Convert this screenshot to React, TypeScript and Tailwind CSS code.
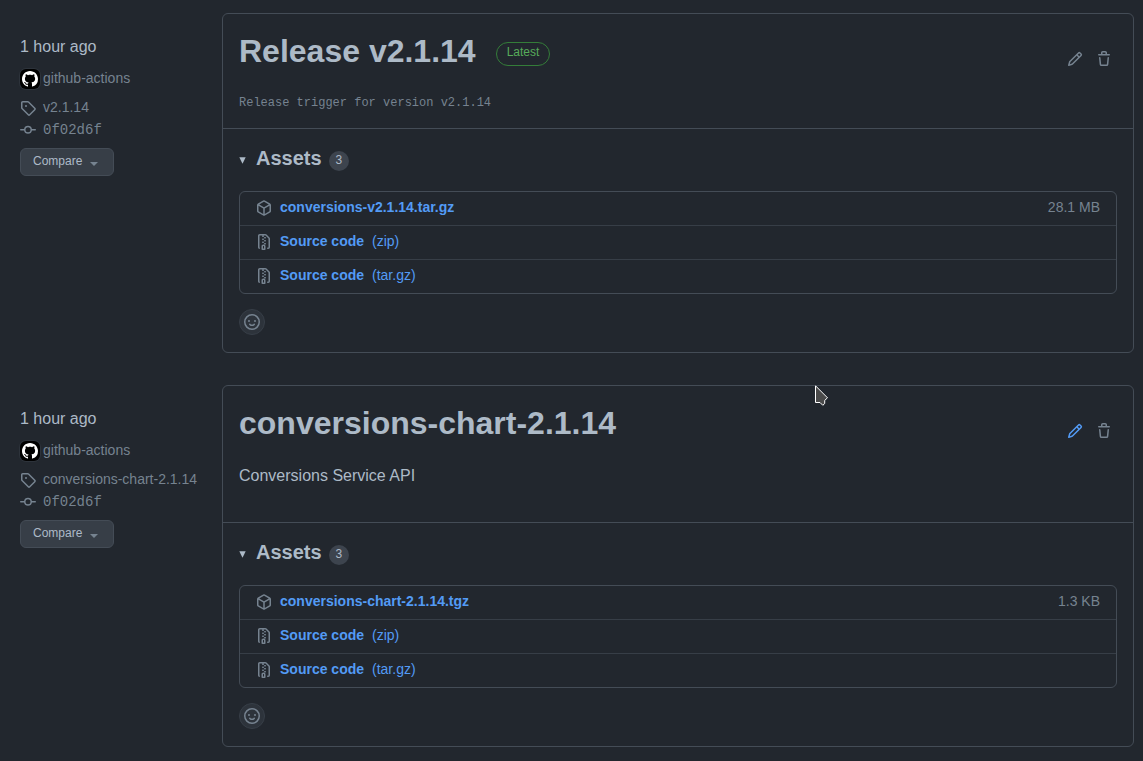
import React from "react";

const icons = {
  pencil:
    "M11.013 1.427a1.75 1.75 0 0 1 2.474 0l1.086 1.086a1.75 1.75 0 0 1 0 2.474l-8.61 8.61c-.21.21-.47.364-.756.445l-3.251.93a.75.75 0 0 1-.927-.928l.929-3.25c.081-.286.235-.547.445-.758l8.61-8.61Zm.176 4.823L9.75 4.81l-6.286 6.287a.253.253 0 0 0-.064.108l-.558 1.953 1.953-.558a.253.253 0 0 0 .108-.064Zm1.238-3.763a.25.25 0 0 0-.354 0L10.811 3.75l1.439 1.44 1.263-1.263a.25.25 0 0 0 0-.354Z",
  trash:
    "M11 1.75V3h2.25a.75.75 0 0 1 0 1.5H2.75a.75.75 0 0 1 0-1.5H5V1.75C5 .784 5.784 0 6.75 0h2.5C10.216 0 11 .784 11 1.75ZM4.496 6.675l.66 6.6a.25.25 0 0 0 .249.225h5.19a.25.25 0 0 0 .249-.225l.66-6.6a.75.75 0 0 1 1.492.149l-.66 6.6A1.748 1.748 0 0 1 10.595 15h-5.19a1.75 1.75 0 0 1-1.741-1.575l-.66-6.6a.75.75 0 1 1 1.492-.15ZM6.5 1.75V3h3V1.75a.25.25 0 0 0-.25-.25h-2.5a.25.25 0 0 0-.25.25Z",
  tag: "M1 7.775V2.75C1 1.784 1.784 1 2.75 1h5.025c.464 0 .91.184 1.238.513l6.25 6.25a1.75 1.75 0 0 1 0 2.474l-5.026 5.026a1.75 1.75 0 0 1-2.474 0l-6.25-6.25A1.752 1.752 0 0 1 1 7.775Zm1.5 0c0 .066.026.13.073.177l6.25 6.25a.25.25 0 0 0 .354 0l5.025-5.025a.25.25 0 0 0 0-.354l-6.25-6.25a.25.25 0 0 0-.177-.073H2.75a.25.25 0 0 0-.25.25ZM6 5a1 1 0 1 1 0 2 1 1 0 0 1 0-2Z",
  commit:
    "M11.93 8.5a4.002 4.002 0 0 1-7.86 0H.75a.75.75 0 0 1 0-1.5h3.32a4.002 4.002 0 0 1 7.86 0h3.32a.75.75 0 0 1 0 1.5Zm-1.43-.75a2.5 2.5 0 1 0-5 0 2.5 2.5 0 0 0 5 0Z",
  package:
    "m8.878.392 5.25 3.045c.54.314.872.89.872 1.514v6.098a1.75 1.75 0 0 1-.872 1.514l-5.25 3.045a1.75 1.75 0 0 1-1.756 0l-5.25-3.045A1.75 1.75 0 0 1 1 11.049V4.951c0-.624.332-1.201.872-1.514L7.122.392a1.75 1.75 0 0 1 1.756 0ZM7.875 1.69l-4.63 2.685L8 7.133l4.755-2.758-4.63-2.685a.248.248 0 0 0-.25 0ZM2.5 5.677v5.372c0 .09.047.171.125.216l4.625 2.683V8.432Zm6.25 8.271 4.625-2.683a.25.25 0 0 0 .125-.216V5.677L8.75 8.432Z",
  zip: "M3.5 1.75v11.5c0 .09.048.173.126.217a.75.75 0 0 1-.752 1.298A1.748 1.748 0 0 1 2 13.25V1.75C2 .784 2.784 0 3.75 0h5.586c.464 0 .909.185 1.237.513l2.914 2.914c.329.328.513.773.513 1.237v8.586A1.75 1.75 0 0 1 12.25 15h-.5a.75.75 0 0 1 0-1.5h.5a.25.25 0 0 0 .25-.25V4.664a.25.25 0 0 0-.073-.177L9.513 1.573a.25.25 0 0 0-.177-.073H7.25a.75.75 0 0 1 0 1.5h-.5a.75.75 0 0 1 0-1.5h-3a.25.25 0 0 0-.25.25Zm3.75 8.75h.5c.966 0 1.75.784 1.75 1.75v3a.75.75 0 0 1-.75.75h-2.5a.75.75 0 0 1-.75-.75v-3c0-.966.784-1.75 1.75-1.75ZM6 5.25a.75.75 0 0 1 .75-.75h.5a.75.75 0 0 1 0 1.5h-.5A.75.75 0 0 1 6 5.25Zm.75 2.25h.5a.75.75 0 0 1 0 1.5h-.5a.75.75 0 0 1 0-1.5ZM8 6.75A.75.75 0 0 1 8.75 6h.5a.75.75 0 0 1 0 1.5h-.5A.75.75 0 0 1 8 6.75ZM8.75 3h.5a.75.75 0 0 1 0 1.5h-.5a.75.75 0 0 1 0-1.5ZM8 9.75A.75.75 0 0 1 8.75 9h.5a.75.75 0 0 1 0 1.5h-.5A.75.75 0 0 1 8 9.75Zm-1 2.5v2.25h1v-2.25a.25.25 0 0 0-.25-.25h-.5a.25.25 0 0 0-.25.25Z",
  smiley:
    "M8 0a8 8 0 1 1 0 16A8 8 0 0 1 8 0ZM1.5 8a6.5 6.5 0 1 0 13 0 6.5 6.5 0 0 0-13 0Zm3.82 1.636a.75.75 0 0 1 1.038.175l.007.009c.103.118.22.222.35.31.264.178.683.37 1.285.37.602 0 1.02-.192 1.285-.371.13-.088.247-.192.35-.31l.007-.008a.75.75 0 0 1 1.222.87c-.06.085-.13.165-.204.254-.16.166-.338.316-.53.445-.474.32-1.18.628-2.13.628-.946 0-1.652-.308-2.126-.63a3.331 3.331 0 0 1-.715-.657.75.75 0 0 1 .183-1.044ZM12 7a1 1 0 1 1-2 0 1 1 0 0 1 2 0ZM5 8a1 1 0 1 1 0-2 1 1 0 0 1 0 2Z",
  github:
    "M8 0C3.58 0 0 3.58 0 8c0 3.54 2.29 6.53 5.47 7.59.4.07.55-.17.55-.38 0-.19-.01-.82-.01-1.49-2.01.37-2.53-.49-2.69-.94-.09-.23-.48-.94-.82-1.13-.28-.15-.68-.52-.01-.53.63-.01 1.08.58 1.23.82.72 1.21 1.87.87 2.33.66.07-.52.28-.87.51-1.07-1.78-.2-3.64-.89-3.64-3.95 0-.87.31-1.59.82-2.15-.08-.2-.36-1.02.08-2.12 0 0 .67-.21 2.2.82.64-.18 1.32-.27 2-.27s1.36.09 2 .27c1.53-1.04 2.2-.82 2.2-.82.44 1.1.16 1.92.08 2.12.51.56.82 1.27.82 2.15 0 3.07-1.87 3.75-3.65 3.95.29.25.54.73.54 1.48 0 1.07-.01 1.93-.01 2.2 0 .21.15.46.55.38A8.01 8.01 0 0 0 16 8c0-4.42-3.58-8-8-8Z",
};

function Icon({ name, className = "text-[#768390]" }: { name: keyof typeof icons; className?: string }) {
  return (
    <svg viewBox="0 0 16 16" width="16" height="16" fill="currentColor" aria-hidden="true" className={`shrink-0 ${className}`}>
      <path d={icons[name]} />
    </svg>
  );
}

interface Asset {
  name: string;
  kind?: string;
  size?: string;
}

interface Release {
  title: string;
  tag: string;
  latest?: boolean;
  editActive?: boolean;
  body: React.ReactNode;
  assets: Asset[];
}

const sources: Asset[] = [
  { name: "Source code", kind: "(zip)" },
  { name: "Source code", kind: "(tar.gz)" },
];

const releases: Release[] = [
  {
    title: "Release v2.1.14",
    tag: "v2.1.14",
    latest: true,
    body: (
      <p className="mt-5 pt-0.5 font-['Liberation_Mono',monospace] text-xs leading-[18px] text-[#768390]">
        Release trigger for version v2.1.14
      </p>
    ),
    assets: [{ name: "conversions-v2.1.14.tar.gz", size: "28.1 MB" }, ...sources],
  },
  {
    title: "conversions-chart-2.1.14",
    tag: "conversions-chart-2.1.14",
    editActive: true,
    body: <p className="mt-5 mb-[18px] text-base leading-6">Conversions Service API</p>,
    assets: [{ name: "conversions-chart-2.1.14.tgz", size: "1.3 KB" }, ...sources],
  },
];

function Meta({ tag }: { tag: string }) {
  return (
    <aside className="w-[202px] shrink-0 pt-[22px] text-sm text-[#768390]">
      <time className="block text-base leading-6 text-[#adbac7]">1 hour ago</time>
      <a href="#author" className="mt-[10px] flex items-center gap-[3px] leading-5">
        <span className="flex size-5 items-center justify-center rounded-md bg-black ring-1 ring-[#2d333b]">
          <Icon name="github" className="text-white" />
        </span>
        <span className="-mt-0.5">github-actions</span>
      </a>
      <a href="#tag" className="mt-2 flex h-[22px] items-center gap-[7px] leading-5">
        <Icon name="tag" />
        <span className="-mt-0.5">{tag}</span>
      </a>
      <a href="#commit" className="flex items-center gap-[7px] font-['Liberation_Mono',monospace] leading-[22px]">
        <Icon name="commit" />
        0f02d6f
      </a>
      <button
        type="button"
        className="mt-[7px] flex h-7 items-center rounded-md border border-[#444c56] bg-[#373e47] pr-[15px] pl-3 text-xs text-[#adbac7]"
      >
        <span className="pb-0.5">Compare</span>
        <span className="mt-1 ml-2 border-x-4 border-t-4 border-x-transparent border-t-[#768390]" />
      </button>
    </aside>
  );
}

function ReleaseCard({ release }: { release: Release }) {
  return (
    <article className="min-w-0 flex-1 rounded-md border border-[#444c56]">
      <header className="flex items-start justify-between border-b border-[#444c56] p-4">
        <div>
          <div className="flex items-end gap-5">
            <h1 className="text-[32px] leading-[42px] font-bold">{release.title}</h1>
            {release.latest && (
              <span className="mb-1.5 rounded-full border border-[#347d39] px-[10px] pb-1 text-xs leading-[18px] text-[#57ab5a]">
                Latest
              </span>
            )}
          </div>
          {release.body}
        </div>
        <div className="mt-4 flex gap-[3px]">
          <button type="button" aria-label="Edit release" className="p-[5px]">
            <Icon name="pencil" className={release.editActive ? "text-[#539bf5]" : "text-[#768390]"} />
          </button>
          <button type="button" aria-label="Delete release" className="p-[5px]">
            <Icon name="trash" />
          </button>
        </div>
      </header>
      <div className="p-4">
        <details open>
          <summary className="flex h-[26px] list-none items-end">
            <svg viewBox="0 0 7 7" width="7" height="7" aria-hidden="true" className="mb-[7px] fill-[#adbac7]">
              <path d="M.3.3h6.4L3.5 6.8Z" />
            </svg>
            <h2 className="ml-[10px] text-xl leading-[26px] font-bold">Assets</h2>
            <span className="ml-[7px] rounded-full bg-[#3d444e] px-[7px] pb-0.5 text-xs leading-[18px]">3</span>
          </summary>
          <ul className="mt-5 divide-y divide-[#373e47] rounded-md border border-[#444c56] text-sm">
            {release.assets.map((asset, i) => (
              <li key={i} className="flex items-center px-4">
                <span className="pb-px">
                  <Icon name={asset.size ? "package" : "zip"} />
                </span>
                <a href="#download" className="ml-2 flex gap-2 pt-1 pb-[7px] leading-[22px] text-[#539bf5]">
                  <span className="font-bold">{asset.name}</span>
                  {asset.kind && <span>{asset.kind}</span>}
                </a>
                {asset.size && <span className="ml-auto pb-[3px] text-[#768390]">{asset.size}</span>}
              </li>
            ))}
          </ul>
        </details>
        <button
          type="button"
          aria-label="Add reaction"
          className="mt-[15px] mb-px flex size-[26px] items-center justify-center rounded-full border border-[#373e47] bg-[#2d333b]"
        >
          <Icon name="smiley" />
        </button>
      </div>
    </article>
  );
}

export default function App() {
  return (
    <main className="relative flex min-h-screen flex-col gap-8 bg-[#22272e] pt-[13px] pr-[9px] pb-3 pl-5 font-['Liberation_Sans',Arial,sans-serif] text-[#adbac7]">
      {releases.map((release) => (
        <section key={release.tag} className="flex">
          <Meta tag={release.tag} />
          <ReleaseCard release={release} />
        </section>
      ))}
      <svg viewBox="0 0 14 22" width="14" height="22" aria-hidden="true" className="pointer-events-none absolute top-[385px] left-[815px]">
        <path d="M.5.8 12.5 12.8 9.7 15.4V18.5L7.8 20.3 5 17.5H.5Z" fill="#4a4a4a" stroke="#fff" strokeWidth="1" />
      </svg>
    </main>
  );
}
